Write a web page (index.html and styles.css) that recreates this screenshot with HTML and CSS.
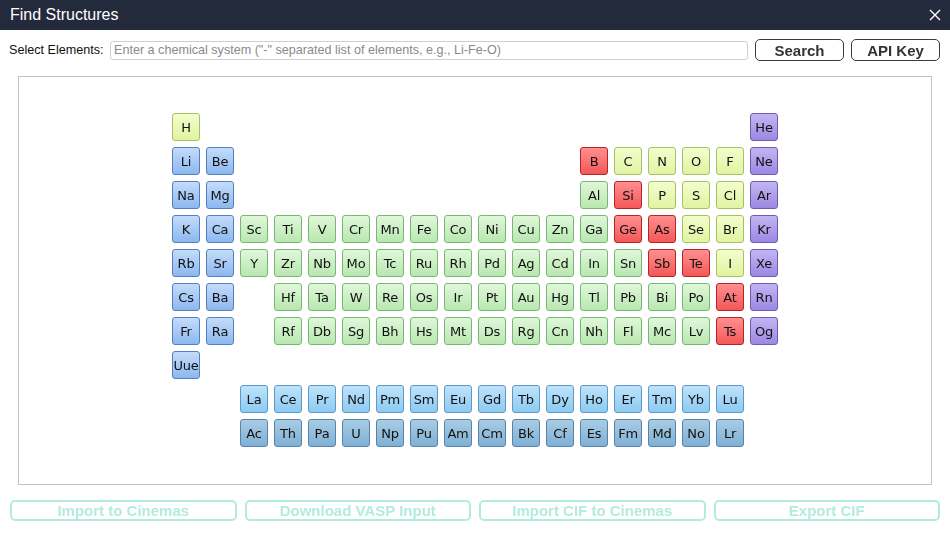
FILE: index.html
```html
<!DOCTYPE html>
<html>
<head>
<meta charset="utf-8">
<link rel="stylesheet" href="styles.css">
</head>
<body>
<div class="header">
  <span class="title">Find Structures</span>
  <svg class="close" width="12" height="12" viewBox="0 0 12 12"><path d="M1 1 L11 11 M11 1 L1 11" stroke="#fff" stroke-width="1.4" fill="none"/></svg>
</div>
<div class="toolbar">
  <label class="label">Select Elements:</label>
  <input class="input" type="text" autofocus placeholder="Enter a chemical system (&quot;-&quot; separated list of elements, e.g., Li-Fe-O)">
  <button class="btn">Search</button>
  <button class="btn">API Key</button>
</div>
<div class="box">
  <div class="ptable">
    <div class="el y">H</div><div class="sp16"></div><div class="el n">He</div>
    <div class="el b">Li</div><div class="el b">Be</div><div class="sp10"></div><div class="el r">B</div><div class="el y">C</div><div class="el y">N</div><div class="el y">O</div><div class="el y">F</div><div class="el n">Ne</div>
    <div class="el b">Na</div><div class="el b">Mg</div><div class="sp10"></div><div class="el g">Al</div><div class="el r">Si</div><div class="el y">P</div><div class="el y">S</div><div class="el y">Cl</div><div class="el n">Ar</div>
    <div class="el b">K</div><div class="el b">Ca</div><div class="el g">Sc</div><div class="el g">Ti</div><div class="el g">V</div><div class="el g">Cr</div><div class="el g">Mn</div><div class="el g">Fe</div><div class="el g">Co</div><div class="el g">Ni</div><div class="el g">Cu</div><div class="el g">Zn</div><div class="el g">Ga</div><div class="el r">Ge</div><div class="el r">As</div><div class="el y">Se</div><div class="el y">Br</div><div class="el n">Kr</div>
    <div class="el b">Rb</div><div class="el b">Sr</div><div class="el g">Y</div><div class="el g">Zr</div><div class="el g">Nb</div><div class="el g">Mo</div><div class="el g">Tc</div><div class="el g">Ru</div><div class="el g">Rh</div><div class="el g">Pd</div><div class="el g">Ag</div><div class="el g">Cd</div><div class="el g">In</div><div class="el g">Sn</div><div class="el r">Sb</div><div class="el r">Te</div><div class="el y">I</div><div class="el n">Xe</div>
    <div class="el b">Cs</div><div class="el b">Ba</div><div class="sp1"></div><div class="el g">Hf</div><div class="el g">Ta</div><div class="el g">W</div><div class="el g">Re</div><div class="el g">Os</div><div class="el g">Ir</div><div class="el g">Pt</div><div class="el g">Au</div><div class="el g">Hg</div><div class="el g">Tl</div><div class="el g">Pb</div><div class="el g">Bi</div><div class="el g">Po</div><div class="el r">At</div><div class="el n">Rn</div>
    <div class="el b">Fr</div><div class="el b">Ra</div><div class="sp1"></div><div class="el g">Rf</div><div class="el g">Db</div><div class="el g">Sg</div><div class="el g">Bh</div><div class="el g">Hs</div><div class="el g">Mt</div><div class="el g">Ds</div><div class="el g">Rg</div><div class="el g">Cn</div><div class="el g">Nh</div><div class="el g">Fl</div><div class="el g">Mc</div><div class="el g">Lv</div><div class="el r">Ts</div><div class="el n">Og</div>
    <div class="el b">Uue</div><div class="sp17"></div>
    <div class="sp2"></div><div class="el la">La</div><div class="el la">Ce</div><div class="el la">Pr</div><div class="el la">Nd</div><div class="el la">Pm</div><div class="el la">Sm</div><div class="el la">Eu</div><div class="el la">Gd</div><div class="el la">Tb</div><div class="el la">Dy</div><div class="el la">Ho</div><div class="el la">Er</div><div class="el la">Tm</div><div class="el la">Yb</div><div class="el la">Lu</div><div class="sp1"></div>
    <div class="sp2"></div><div class="el ac">Ac</div><div class="el ac">Th</div><div class="el ac">Pa</div><div class="el ac">U</div><div class="el ac">Np</div><div class="el ac">Pu</div><div class="el ac">Am</div><div class="el ac">Cm</div><div class="el ac">Bk</div><div class="el ac">Cf</div><div class="el ac">Es</div><div class="el ac">Fm</div><div class="el ac">Md</div><div class="el ac">No</div><div class="el ac">Lr</div><div class="sp1"></div>
  </div>
</div>
<div class="actions">
  <button class="abtn" disabled>Import to Cinemas</button>
  <button class="abtn" disabled>Download VASP Input</button>
  <button class="abtn" disabled>Import CIF to Cinemas</button>
  <button class="abtn" disabled>Export CIF</button>
</div>
</body>
</html>
```
FILE: styles.css
```css
* { box-sizing: border-box; }
html, body { margin: 0; padding: 0; background: #fff; }
body { font-family: "Liberation Sans", Arial, sans-serif; width: 950px; height: 549px; overflow: hidden; }

.header {
  height: 30px;
  background: #232a3b;
  display: flex;
  align-items: center;
  justify-content: space-between;
  padding: 0 9px 0 10px;
}
.title { color: #fff; font-size: 16px; }
.close { display: block; }

.toolbar {
  display: flex;
  align-items: center;
  padding: 9px 10px 0 9px;
  height: 31px;
}
.label { font-size: 12.6px; color: #111; width: 101px; flex: none; }
.input {
  flex: 1;
  height: 19px;
  border: 1px solid #cfcfcf;
  border-radius: 3px;
  padding: 0 2px 0 3px;
  font-family: "Liberation Sans", Arial, sans-serif;
  font-size: 12.6px;
  color: #222;
  outline: none;
  caret-color: #000;
}
.input::placeholder { color: #8a8a8a; }
.btn {
  width: 89px;
  height: 22px;
  margin-left: 7px;
  background: #fff;
  border: 1px solid #3c3c3c;
  border-radius: 5px;
  font-family: "Liberation Sans", Arial, sans-serif;
  font-weight: bold;
  font-size: 15px;
  color: #333;
  padding: 0;
}

.box {
  margin: 15px 18px 0 18px;
  height: 409px;
  border: 1px solid #c4c4c4;
  display: flex;
  justify-content: center;
  padding-top: 36px;
}
.ptable {
  display: grid;
  grid-template-columns: repeat(18, 28px);
  grid-auto-rows: 28px;
  gap: 6px;
  align-content: start;
}
.sp1 { grid-column: span 1; }
.sp2 { grid-column: span 2; }
.sp10 { grid-column: span 10; }
.sp16 { grid-column: span 16; }
.sp17 { grid-column: span 17; }
.el {
  border: 1px solid;
  border-radius: 3px;
  display: flex;
  align-items: center;
  justify-content: center;
  font-family: "DejaVu Sans", Verdana, sans-serif;
  font-size: 13px;
  color: #111;
  letter-spacing: -0.2px;
}
.el.b { background: linear-gradient(#c3dcfa, #8cb8ef); border-color: #5580bd; }
.el.y { background: linear-gradient(#f4fdcc, #e0f4a2); border-color: #a8bf64; }
.el.g { background: linear-gradient(#e0f7da, #b9e7b0); border-color: #78b874; }
.el.r { background: linear-gradient(#ff8f8f, #f45858); border-color: #b82424; }
.el.n { background: linear-gradient(#c2b5f3, #9c88e3); border-color: #6f5cb0; }
.el.la { background: linear-gradient(#bfe3fb, #8ccaf2); border-color: #5c9ac8; }
.el.ac { background: linear-gradient(#a9cce4, #7fb0d4); border-color: #5583aa; }

.actions {
  display: grid;
  grid-template-columns: repeat(4, 1fr);
  gap: 8px;
  padding: 15px 10px 0 10px;
}
.abtn {
  height: 21px;
  background: #fff;
  border: 2px solid #b3ebde;
  border-radius: 5px;
  font-family: "Liberation Sans", Arial, sans-serif;
  font-weight: bold;
  font-size: 15px;
  color: #b3ebde;
  padding: 0;
}
```
